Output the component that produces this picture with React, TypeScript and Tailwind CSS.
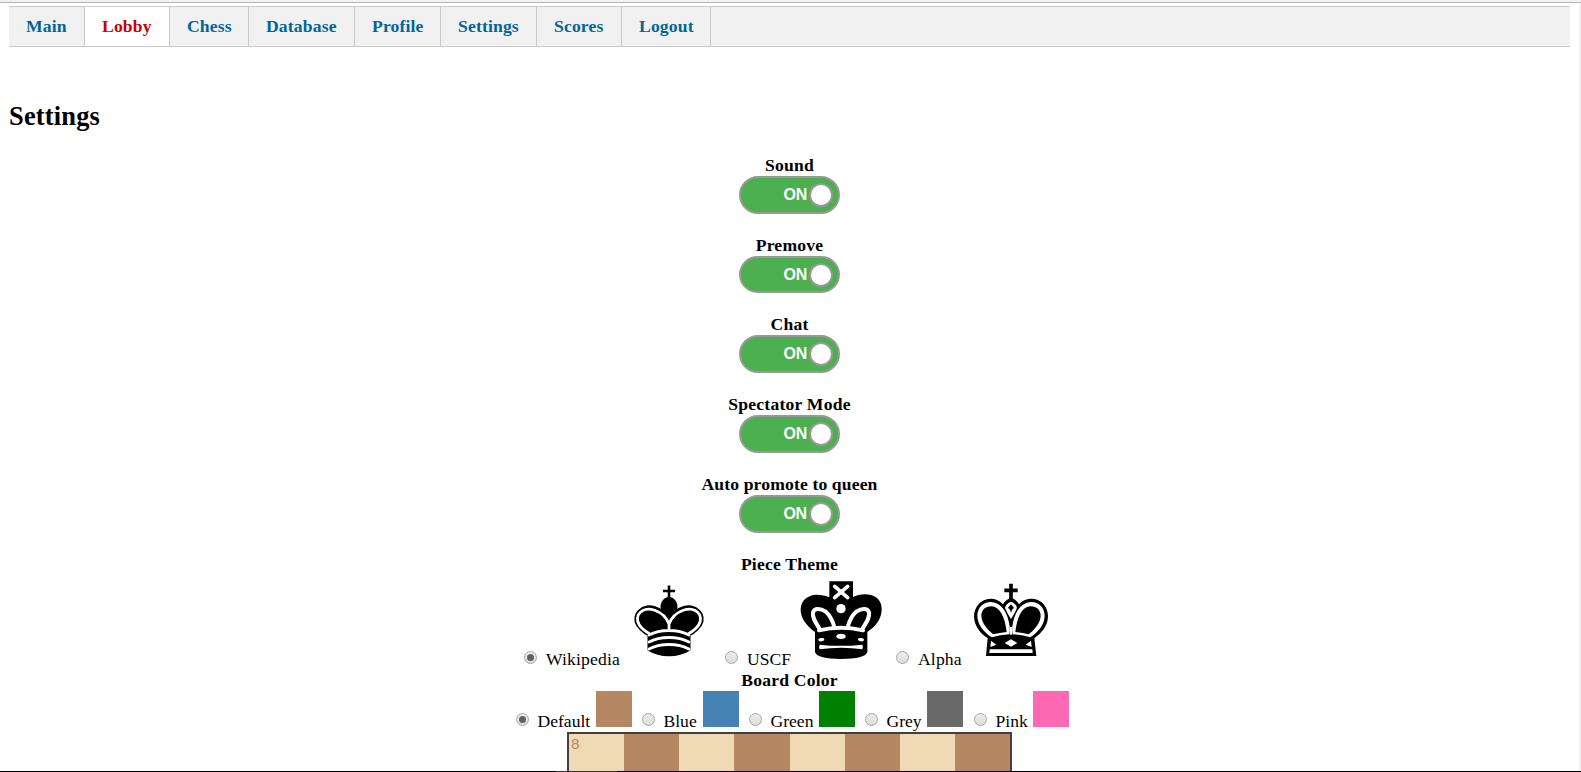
import { useState } from "react";
import type { ReactNode } from "react";

const tabs = [
  { name: "Main", width: "w-[76px]" },
  { name: "Lobby", width: "w-[85px]" },
  { name: "Chess", width: "w-[79px]" },
  { name: "Database", width: "w-[106px]" },
  { name: "Profile", width: "w-[86px]" },
  { name: "Settings", width: "w-[96px]" },
  { name: "Scores", width: "w-[85px]" },
  { name: "Logout", width: "w-[89px]" },
];

const toggles = [
  { name: "Sound", tracking: "tracking-[0.2px]", row: "h-[80px]", height: "h-[38px]" },
  { name: "Premove", tracking: "tracking-[0.2px]", row: "h-[79px]", height: "h-[37px]" },
  { name: "Chat", tracking: "tracking-[0.2px]", row: "h-[80px]", height: "h-[38px]" },
  { name: "Spectator Mode", tracking: "tracking-[0.22px]", row: "h-[80px]", height: "h-[38px]" },
  { name: "Auto promote to queen", tracking: "tracking-[0.14px]", row: "h-[80px]", height: "h-[38px]" },
];

const boardColors = [
  { name: "Default", color: "bg-[#b58863]", label: "w-[58px]", cell: "w-[126px]" },
  { name: "Blue", color: "bg-[#4682b4]", label: "w-[39px]", cell: "w-[107px]" },
  { name: "Green", color: "bg-[#008000]", label: "w-[48px]", cell: "w-[116px]" },
  { name: "Grey", color: "bg-[#696969]", label: "w-[40px]", cell: "w-[109px]" },
  { name: "Pink", color: "bg-[#ff69b4]", label: "w-[37px]", cell: "w-[95px]" },
];

function WikipediaKing() {
  return (
    <svg viewBox="0 0 45 45" className="size-[90px]" fill="none" stroke="#000" strokeWidth="1.5" strokeLinecap="round" strokeLinejoin="round">
      <path d="M22.5 11.6V5.200M19.500 8h6" strokeWidth="1.3" strokeLinecap="butt" />
      <path fill="#000" strokeLinecap="butt" d="M22.5 25s4.500-7.500 3.300-10.500c0 0-1-2.700-3.300-2.700s-3.300 2.700-3.300 2.700c-1.200 3 3.300 10.500 3.300 10.500" />
      <path fill="#000" d="M12.5 37.300c5.500 3.500 14.500 3.500 20 0v-7.300s9-4.500 6-10.500c-4-6.500-13.500-3.500-16 4V27v-3.500c-2.500-7.500-12-10.500-16-4-3 6 6 10.500 6 10.500v7.300" />
      <path stroke="#fff" strokeWidth="1.4" d="M32 29.500s8.300-4 5.830-9.650C33.950 14.200 25 18 22.500 24.500v2.100-2.100C20 18 11.050 14.200 7.170 19.850 4.700 25.500 13 29.500 13 29.500M12.500 30c5.500-3 14.500-3 20 0m-20 3.500c5.500-3 14.500-3 20 0m-20 3.500c5.500-3 14.500-3 20 0" />
    </svg>
  );
}

function UscfKing() {
  return (
    <svg viewBox="0 0 264 264" className="size-[88px]" fill="none" strokeLinecap="round" strokeLinejoin="round">
      <path fill="#000" d="M97 13H168V60C182 53 202 49 222 54C245 60 255 78 254 100C253 126 236 149 211 165V226Q203 246 132 246Q62 246 54 226V165C28 147 10 122 11 96C12 70 32 54 58 53C74 53 86 56 97 61Z" />
      <path stroke="#fff" strokeWidth="11" d="M113 28L152 62M152 28L113 62" />
      <circle cx="132" cy="95" r="14" fill="#fff" />
      <path stroke="#fff" strokeWidth="12" d="M68 156C57 138 45 122 48 106C52 92 71 94 85 103C100 116 107 132 112 150M196 156C207 138 219 122 216 106C212 92 193 94 179 103C164 116 157 132 152 150M66 160Q132 145 198 160" />
      <ellipse cx="132" cy="178" rx="14" ry="8" fill="#fff" />
      <ellipse cx="73" cy="188" rx="9" ry="5" fill="#fff" transform="rotate(-8 73 188)" />
      <ellipse cx="192" cy="188" rx="9" ry="5" fill="#fff" transform="rotate(8 192 188)" />
      <path fill="#fff" d="M68 203Q132 210 196 203Q200 212 196 217Q132 208 68 217Q64 211 68 203Z" />
    </svg>
  );
}

function AlphaKing() {
  return (
    <svg viewBox="0 0 264 264" className="size-[88px]" fill="none">
      <path stroke="#000" strokeWidth="11" d="M132 20V72M112 40H152" />
      <path fill="#000" d="M132 62C144 66 151 73 156 82C166 70 180 65 196 65C224 67 243 89 243 118C243 148 222 170 202 184L208 237H57L62 184C40 170 21 146 21 118C21 89 42 66 70 65C86 65 99 71 108 82C113 73 120 66 132 62Z" />
      <path fill="#fff" d="M132 74C142 77 148 84 150 92Q145 105 132 126Q119 105 114 92C116 84 122 77 132 74Z" />
      <path fill="#fff" d="M71 75C100 75 122 102 128 148Q129 162 127 172Q98 174 75 181C53 168 31 144 31 116C31 92 49 75 71 75ZM194 75C165 75 142 102 136 148Q135 162 137 172Q166 174 189 181C211 168 233 144 233 116C233 92 215 75 194 75Z" />
      <path fill="#000" d="M73 88C98 88 114 120 119 165Q97 167 79 172C61 158 44 138 43 117C43 99 55 88 73 88ZM191 88C166 88 150 120 145 165Q167 167 185 172C203 158 220 138 221 117C221 99 209 88 191 88Z" />
      <path fill="#000" d="M132 82L141 92L135 98L132 108L129 98L123 92Z" />
      <path stroke="#fff" strokeWidth="7" d="M132 150V173" />
      <path fill="#fff" d="M132 187L151 198L132 209L113 198ZM72 191L88 203L70 210ZM192 191L176 203L194 210ZM68 217H196L197 228H67Z" />
    </svg>
  );
}

const pieceThemes: { name: string; label: string; cell: string; art: ReactNode }[] = [
  { name: "Wikipedia", label: "w-[78px] tracking-[0.15px]", cell: "w-[201px]", art: <WikipediaKing /> },
  { name: "USCF", label: "w-[50px]", cell: "w-[171px]", art: <UscfKing /> },
  { name: "Alpha", label: "w-[49px] tracking-[0.15px]", cell: "w-[159px]", art: <AlphaKing /> },
];

function Radio({ checked, onChange, name }: { checked: boolean; onChange: () => void; name: string }) {
  return (
    <span className="mr-[8.5px] flex size-[13px] shrink-0 items-center justify-center rounded-full border border-[#a6a6a6] bg-linear-to-b from-[#ededed] to-[#dcdcdc]">
      <input type="radio" name={name} checked={checked} onChange={onChange} className="size-[7px] appearance-none rounded-full checked:bg-[#606060]" />
    </span>
  );
}

function Toggle({ height }: { height: string }) {
  const [on, setOn] = useState(true);
  return (
    <button
      onClick={() => setOn(!on)}
      className={`flex ${height} w-[101px] items-center rounded-[19px] border-2 border-[#999] ${on ? "justify-end bg-[#4caf50] pr-[5px]" : "flex-row-reverse justify-end bg-[#bbb] pl-[5px]"}`}
    >
      <span className="mr-[2px] font-['Liberation_Sans',Arial,sans-serif] text-[16px] leading-[20px] font-bold tracking-[-0.2px] text-white">{on ? "ON" : "OFF"}</span>
      <span className="size-[24px] rounded-full border-2 border-[#999] bg-white" />
    </button>
  );
}

export default function App() {
  const [tab, setTab] = useState("Lobby");
  const [theme, setTheme] = useState("Wikipedia");
  const [color, setColor] = useState("Default");

  return (
    <div className="flex h-[772px] w-[1581px] flex-col overflow-hidden bg-white font-['Liberation_Serif','Times_New_Roman',serif] text-[17.6px] leading-[20px] text-black">
      <div className="h-[3px] shrink-0 border-b border-[#b6b6b6] bg-[#f2f2f2]" />
      <div className="flex h-[768px] shrink-0">
        <main className="flex w-[1579px] flex-col overflow-hidden px-[9px] pt-[3px]">
          <nav className="flex h-[41px] w-[1561px] shrink-0 border-y border-[#c9c9c9] bg-[#f1f1f1]">
            {tabs.map((t) => (
              <button
                key={t.name}
                onClick={() => setTab(t.name)}
                className={`${t.width} border-r border-[#c9c9c9] pb-[2px] pl-[17px] text-left font-bold tracking-[0.15px] whitespace-nowrap ${t.name === tab ? "bg-white text-[#c00]" : "text-[#069]"}`}
              >
                {t.name}
              </button>
            ))}
          </nav>
          <h1 className="mt-[54px] h-[54px] shrink-0 text-[26.4px] leading-[30px] font-bold tracking-[0.2px]">Settings</h1>

          <div className="flex flex-col items-center">
            {toggles.map((t) => (
              <div key={t.name} className={`${t.row} flex shrink-0 flex-col items-center`}>
                <div className={`mb-[1px] font-bold ${t.tracking}`}>{t.name}</div>
                <Toggle height={t.height} />
              </div>
            ))}
          </div>

          <div className="h-[24px] shrink-0 text-center font-bold tracking-[0.2px]">Piece Theme</div>
          <div className="ml-[515px] flex h-[92px] shrink-0 items-end pb-[2px]">
            {pieceThemes.map((p) => (
              <label key={p.name} className={`${p.cell} flex h-[90px] items-end`}>
                <span className="flex h-[18px] items-start pt-px">
                  <Radio name="theme" checked={theme === p.name} onChange={() => setTheme(p.name)} />
                </span>
                <span className={`${p.label} mb-[1px] ml-[0.5px] h-[18px] shrink-0`}>{p.name}</span>
                <span className="mb-[3px] shrink-0">{p.art}</span>
              </label>
            ))}
          </div>

          <div className="h-[21px] shrink-0 text-center font-bold tracking-[0.2px]">Board Color</div>
          <div className="ml-[507px] flex h-[41px] shrink-0">
            {boardColors.map((c) => (
              <label key={c.name} className={`${c.cell} flex h-[36px]`}>
                <span className="pt-[22px]">
                  <Radio name="color" checked={color === c.name} onChange={() => setColor(c.name)} />
                </span>
                <span className={`${c.label} mr-[0.5px] shrink-0 pt-[20px]`}>{c.name}</span>
                <span className={`${c.color} size-[36px] shrink-0`} />
              </label>
            ))}
          </div>

          <div className="ml-[558px] grid h-[60px] w-[445px] shrink-0 grid-cols-8 border-2 border-[#404040]">
            {Array.from({ length: 8 }, (_, i) => (
              <div key={i} className={`h-[56px] pl-[2px] font-['Liberation_Sans',Arial,sans-serif] text-[15.4px] leading-[20px] text-[#b58863] ${i % 2 ? "bg-[#b58863]" : "bg-[#f0d9b5]"}`}>
                {i === 0 ? "8" : ""}
              </div>
            ))}
          </div>
        </main>
        <div className="w-[2px] bg-[#f1f1f1]" />
      </div>
      <div className="flex h-px shrink-0 bg-black pl-[556px]">
        <div className="w-[61px] bg-[#333]" />
      </div>
    </div>
  );
}
